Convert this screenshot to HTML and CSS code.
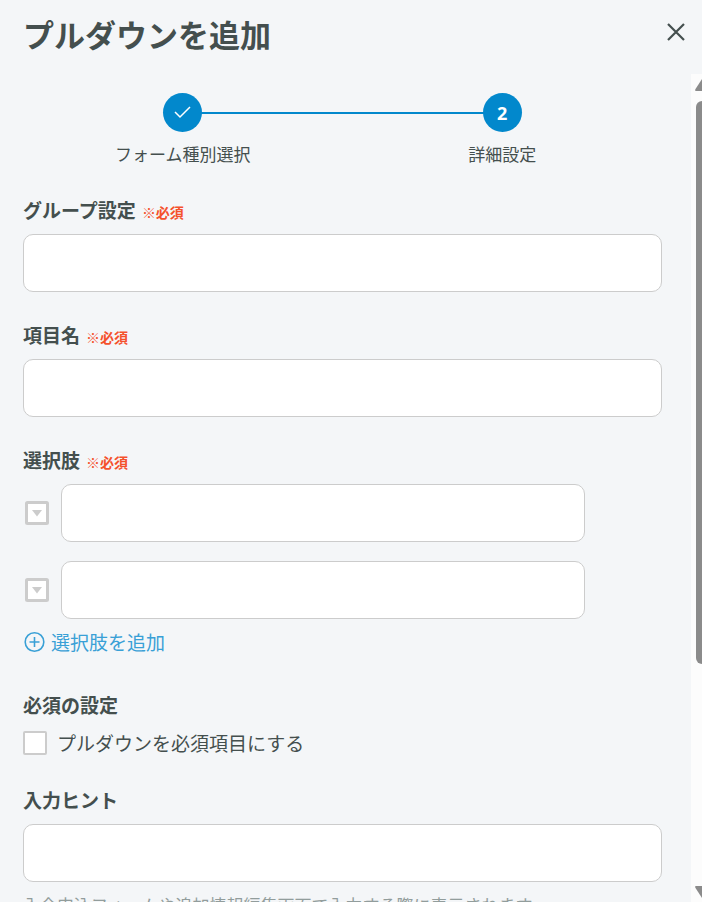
FILE: index.html
```html
<!DOCTYPE html>
<html lang="ja">
<head>
  <meta charset="UTF-8">
  <meta name="viewport" content="width=device-width, initial-scale=1">
  <title>プルダウンを追加</title>
  <link rel="stylesheet" href="styles.css">
</head>
<body>
  <div class="dialog">

    <!-- header -->
    <header class="dialog-header">
      <h1>プルダウンを追加</h1>
      <button type="button" class="close" aria-label="閉じる">
        <svg width="18" height="18" viewBox="0 0 18 18"><path d="M1 1L17 17M17 1L1 17"/></svg>
      </button>
    </header>

    <div class="dialog-body">
      <form class="content">

        <!-- steps -->
        <ol class="steps">
          <li class="step">
            <span class="circle">
              <svg width="18" height="14" viewBox="0 0 18 14"><path d="M1 6L6 11L16 1"/></svg>
            </span>
            <span class="step-name">フォーム種別選択</span>
          </li>
          <li class="step">
            <span class="circle">2</span>
            <span class="step-name">詳細設定</span>
          </li>
        </ol>

        <div class="field">
          <label class="label" for="group">グループ設定<span class="required">※必須</span></label>
          <input type="text" class="text" id="group">
        </div>

        <div class="field">
          <label class="label" for="name">項目名<span class="required">※必須</span></label>
          <input type="text" class="text" id="name">
        </div>

        <div class="field">
          <label class="label" for="option1">選択肢<span class="required">※必須</span></label>
          <div class="options">
            <div class="option">
              <svg class="option-icon" width="24" height="24" viewBox="0 0 24 24"><rect x="1.500" y="1.500" width="21" height="21" rx="1"/><path d="M7 9H17L12 15.500Z"/></svg>
              <input type="text" class="text" id="option1">
            </div>
            <div class="option">
              <svg class="option-icon" width="24" height="24" viewBox="0 0 24 24"><rect x="1.500" y="1.500" width="21" height="21" rx="1"/><path d="M7 9H17L12 15.500Z"/></svg>
              <input type="text" class="text" id="option2" aria-label="選択肢2">
            </div>
          </div>
          <button type="button" class="add">
            <svg width="22" height="22" viewBox="0 0 22 22"><circle cx="11.500" cy="11" r="9.300"/><path d="M6.500 11H16.500M11.500 6V16"/></svg>
            選択肢を追加
          </button>
        </div>

        <div class="field">
          <h2 class="label">必須の設定</h2>
          <label class="check">
            <input type="checkbox">
            プルダウンを必須項目にする
          </label>
        </div>

        <div class="field">
          <label class="label" for="hint">入力ヒント</label>
          <input type="text" class="text" id="hint">
          <p class="note">入会申込フォームや追加情報編集画面で入力する際に表示されます</p>
        </div>
      </form>

      <!-- scrollbar -->
      <div class="scrollbar">
        <svg width="16" height="24" viewBox="0 0 16 24"><path d="M0.500 15L7 5H11L17 15Q17 17 16 17H1Q-0.500 17 0.500 15Z"/></svg>
        <div class="thumb"></div>
        <svg width="16" height="24" viewBox="0 0 16 24"><path d="M0.500 10L7 20H11L17 10Q17 8 16 8H1Q-0.500 8 0.500 10Z"/></svg>
      </div>
    </div>
  </div>
</body>
</html>
```

FILE: styles.css
```css
* {
  margin: 0; padding: 0; box-sizing: border-box;
}

body {
  font-family: "Noto Sans CJK JP", sans-serif;
  font-size: 19px;
  line-height: 28px;
  color: #444f4e;
  background: #f4f6f8;
}

button {
  border: none;
  background: none;
  font: inherit;
  cursor: pointer;
}

svg {
  display: block;
  flex-shrink: 0;
}

.dialog {
  display: flex;
  flex-direction: column;
  height: 100vh;
  overflow: hidden;
}

.dialog-header {
  display: flex;
  justify-content: space-between;
  align-items: flex-start;
  padding: 12px 17px 18px 23px;
}

h1 {
  font-size: 31px;
  line-height: 44px;
}

.close {
  padding: 11px 0;
  line-height: 1;
}

.close svg {
  fill: none;
  stroke: #444f4e;
  stroke-width: 2.2;
}

.dialog-body {
  display: flex;
  flex: 1;
  min-height: 0;
}

.content {
  flex: 1;
  min-width: 0;
  padding: 19px 29px 0 23px;
  overflow: hidden;
}

/* steps */
.steps {
  display: flex;
  margin-bottom: 29px;
  list-style: none;
}

.step {
  position: relative;
  display: flex;
  flex: 1;
  flex-direction: column;
  align-items: center;
  gap: 8px;
}

.step + .step::before {
  content: "";
  position: absolute;
  top: 19px;
  left: -50%;
  width: 100%;
  height: 2px;
  background: #0288cc;
}

.circle {
  z-index: 1;
  display: flex;
  justify-content: center;
  align-items: center;
  width: 39px;
  height: 39px;
  border-radius: 50%;
  background: #0288cc;
  color: #fff;
  font-family: "Noto Sans", sans-serif;
  font-size: 18px;
  font-weight: bold;
}

.circle svg {
  fill: none;
  stroke: #fff;
  stroke-width: 1.5;
}

.step-name {
  font-size: 17px;
}

/* fields */
.field {
  margin-bottom: 30px;
}

.label {
  display: block;
  margin-bottom: 11px;
  font-size: 19px;
  line-height: 26px;
  font-weight: bold;
}

.required {
  margin-left: 6px;
  font-size: 14px;
  line-height: 1;
  color: #f4512c;
}

.text {
  display: block;
  width: 100%;
  height: 58px;
  padding: 0 16px;
  border: 1px solid #ccc;
  border-radius: 10px;
  background: #fff;
  color: inherit;
  font: inherit;
}

.options {
  display: flex;
  flex-direction: column;
  gap: 19px;
  padding: 0 77px 0 2px;
}

.option {
  display: flex;
  align-items: center;
  gap: 12px;
}

.option-icon rect {
  fill: #fff;
  stroke: #ccc;
  stroke-width: 3;
}

.option-icon path {
  fill: #ccc;
}

.add {
  display: flex;
  align-items: center;
  gap: 6px;
  padding: 9px 0 6px;
  color: #39a0d6;
}

.add svg {
  fill: none;
  stroke: #39a0d6;
  stroke-width: 1.6;
}

.check {
  display: flex;
  align-items: center;
  gap: 10px;
}

.check input {
  appearance: none;
  width: 24px;
  height: 24px;
  border: 2px solid #ccc;
  border-radius: 2px;
  background: #fff;
}

.note {
  margin-top: 9px;
  font-size: 17px;
  color: #929d9c;
}

/* scrollbar */
.scrollbar {
  display: flex;
  flex-direction: column;
  width: 11px;
  padding-left: 4px;
  background: #fcfcfc;
  overflow: hidden;
}

.scrollbar path {
  fill: #8b8b8b;
}

.thumb {
  flex: 0 0 68%;
  width: 12px;
  margin: 3px 0 auto 1px;
  border-radius: 6px;
  background: #8b8b8b;
}
```
